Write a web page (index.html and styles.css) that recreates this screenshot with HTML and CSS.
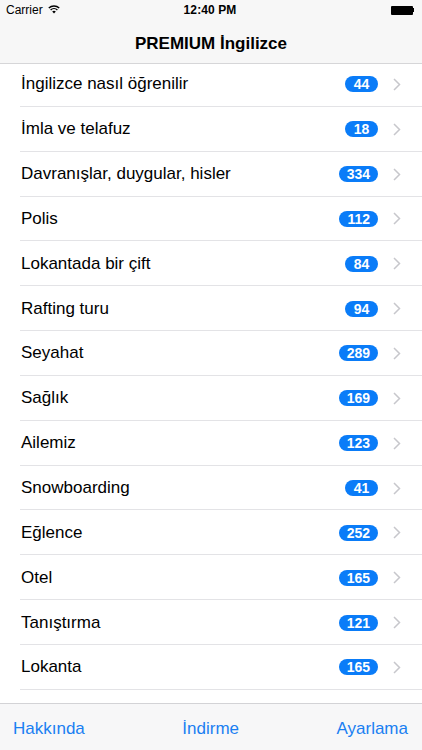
FILE: index.html
```html
<!DOCTYPE html>
<html lang="tr">
<head>
<meta charset="utf-8">
<link rel="stylesheet" href="styles.css">
</head>
<body>
<header class="topbar">
  <div class="status">
    <div class="status-left">Carrier
      <svg class="wifi" width="12" height="9" viewBox="0 0 12 9"><path d="M6 8.6 L4.2 6.6 A2.6 2.6 0 0 1 7.8 6.6 Z" fill="#000"/><path d="M2.6 5 A4.9 4.9 0 0 1 9.4 5" stroke="#000" stroke-width="1.4" fill="none"/><path d="M0.8 3.1 A7.4 7.4 0 0 1 11.2 3.1" stroke="#000" stroke-width="1.4" fill="none"/></svg>
    </div>
    <div class="status-time">12:40 PM</div>
    <div class="status-right">
      <div class="battery"><div class="battery-body"></div><div class="battery-tip"></div></div>
    </div>
  </div>
  <div class="nav">PREMIUM İngilizce</div>
</header>

<ul class="list">
  <li class="row"><span class="label">İngilizce nasıl öğrenilir</span><span class="badge">44</span><svg class="chev" width="8" height="13" viewBox="0 0 8 13"><path d="M1 1 L6.5 6.5 L1 12" fill="none" stroke="#c7c7cc" stroke-width="1.5"/></svg></li>
  <li class="row"><span class="label">İmla ve telafuz</span><span class="badge">18</span><svg class="chev" width="8" height="13" viewBox="0 0 8 13"><path d="M1 1 L6.5 6.5 L1 12" fill="none" stroke="#c7c7cc" stroke-width="1.5"/></svg></li>
  <li class="row"><span class="label">Davranışlar, duygular, hisler</span><span class="badge">334</span><svg class="chev" width="8" height="13" viewBox="0 0 8 13"><path d="M1 1 L6.5 6.5 L1 12" fill="none" stroke="#c7c7cc" stroke-width="1.5"/></svg></li>
  <li class="row"><span class="label">Polis</span><span class="badge">112</span><svg class="chev" width="8" height="13" viewBox="0 0 8 13"><path d="M1 1 L6.5 6.5 L1 12" fill="none" stroke="#c7c7cc" stroke-width="1.5"/></svg></li>
  <li class="row"><span class="label">Lokantada bir çift</span><span class="badge">84</span><svg class="chev" width="8" height="13" viewBox="0 0 8 13"><path d="M1 1 L6.5 6.5 L1 12" fill="none" stroke="#c7c7cc" stroke-width="1.5"/></svg></li>
  <li class="row"><span class="label">Rafting turu</span><span class="badge">94</span><svg class="chev" width="8" height="13" viewBox="0 0 8 13"><path d="M1 1 L6.5 6.5 L1 12" fill="none" stroke="#c7c7cc" stroke-width="1.5"/></svg></li>
  <li class="row"><span class="label">Seyahat</span><span class="badge">289</span><svg class="chev" width="8" height="13" viewBox="0 0 8 13"><path d="M1 1 L6.5 6.5 L1 12" fill="none" stroke="#c7c7cc" stroke-width="1.5"/></svg></li>
  <li class="row"><span class="label">Sağlık</span><span class="badge">169</span><svg class="chev" width="8" height="13" viewBox="0 0 8 13"><path d="M1 1 L6.5 6.5 L1 12" fill="none" stroke="#c7c7cc" stroke-width="1.5"/></svg></li>
  <li class="row"><span class="label">Ailemiz</span><span class="badge">123</span><svg class="chev" width="8" height="13" viewBox="0 0 8 13"><path d="M1 1 L6.5 6.5 L1 12" fill="none" stroke="#c7c7cc" stroke-width="1.5"/></svg></li>
  <li class="row"><span class="label">Snowboarding</span><span class="badge">41</span><svg class="chev" width="8" height="13" viewBox="0 0 8 13"><path d="M1 1 L6.5 6.5 L1 12" fill="none" stroke="#c7c7cc" stroke-width="1.5"/></svg></li>
  <li class="row"><span class="label">Eğlence</span><span class="badge">252</span><svg class="chev" width="8" height="13" viewBox="0 0 8 13"><path d="M1 1 L6.5 6.5 L1 12" fill="none" stroke="#c7c7cc" stroke-width="1.5"/></svg></li>
  <li class="row"><span class="label">Otel</span><span class="badge">165</span><svg class="chev" width="8" height="13" viewBox="0 0 8 13"><path d="M1 1 L6.5 6.5 L1 12" fill="none" stroke="#c7c7cc" stroke-width="1.5"/></svg></li>
  <li class="row"><span class="label">Tanıştırma</span><span class="badge">121</span><svg class="chev" width="8" height="13" viewBox="0 0 8 13"><path d="M1 1 L6.5 6.5 L1 12" fill="none" stroke="#c7c7cc" stroke-width="1.5"/></svg></li>
  <li class="row"><span class="label">Lokanta</span><span class="badge">165</span><svg class="chev" width="8" height="13" viewBox="0 0 8 13"><path d="M1 1 L6.5 6.5 L1 12" fill="none" stroke="#c7c7cc" stroke-width="1.5"/></svg></li>
  <li class="row"><span class="label"></span><span class="badge badge-empty"></span></li>
</ul>

<nav class="tabbar">
  <span class="tab">Hakkında</span>
  <span class="tab">İndirme</span>
  <span class="tab">Ayarlama</span>
</nav>
</body>
</html>
```

FILE: styles.css
```css
* { box-sizing: border-box; }
html, body {
  margin: 0;
  padding: 0;
  height: 100%;
  overflow: hidden;
  background: #fff;
  font-family: "Liberation Sans", Arial, sans-serif;
  color: #000;
}
.topbar {
  position: fixed;
  top: 0;
  left: 0;
  right: 0;
  z-index: 10;
  background: #f7f7f7;
  border-bottom: 1px solid #d6d6d8;
}
.status {
  height: 20px;
  display: flex;
  align-items: center;
  justify-content: space-between;
  padding: 0 8px 0 6px;
  font-size: 12px;
}
.status-left {
  display: flex;
  align-items: center;
  gap: 5px;
  width: 80px;
}
.wifi { margin-top: -1px; }
.status-time {
  font-weight: bold;
  font-size: 12px;
  flex: 1;
  text-align: center;
  letter-spacing: 0.1px;
}
.status-right {
  width: 80px;
  display: flex;
  justify-content: flex-end;
}
.battery {
  display: flex;
  align-items: center;
}
.battery-body {
  width: 22px;
  height: 9px;
  background: #000;
  border-radius: 1px;
}
.battery-tip {
  width: 1.5px;
  height: 4px;
  background: #000;
}
.nav {
  height: 43px;
  display: flex;
  align-items: center;
  justify-content: center;
  font-weight: bold;
  font-size: 17px;
  padding-top: 5px;
}
.list {
  list-style: none;
  margin: 0;
  padding: 62px 0 0 0;
}
.row {
  height: 44.85px;
  display: flex;
  align-items: center;
  padding: 0 21px 0 21px;
  position: relative;
  font-size: 17px;
}
.row::after {
  content: "";
  position: absolute;
  left: 20px;
  right: 0;
  bottom: 0;
  height: 1px;
  background: #e3e3e6;
}
.label {
  flex: 1;
  white-space: nowrap;
}
.badge {
  background: #0a7cf8;
  color: #fff;
  font-weight: bold;
  font-size: 14px;
  height: 16px;
  min-width: 33px;
  padding: 0 8px;
  border-radius: 8px;
  display: flex;
  align-items: center;
  justify-content: center;
  margin-right: 15px;
}
.badge-empty { margin-right: 23px; }
.chev { display: block; }
.tabbar {
  position: fixed;
  left: 0;
  right: 0;
  bottom: 0;
  height: 47px;
  z-index: 10;
  background: #f7f7f8;
  border-top: 1px solid #d3d3d6;
  display: flex;
  align-items: center;
  justify-content: space-between;
  padding: 3px 14px 0 13px;
}
.tab {
  color: #1a7ff2;
  font-size: 17px;
}
```
